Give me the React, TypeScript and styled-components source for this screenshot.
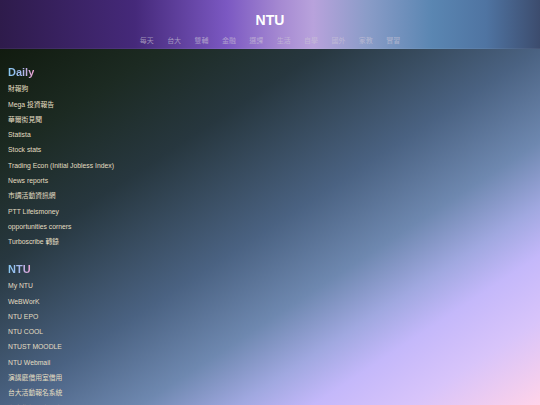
import styled, { createGlobalStyle } from "styled-components";

const GlobalStyle = createGlobalStyle`
  html, body {
    margin: 0;
    padding: 0;
    height: 100%;
  }
  body {
    font-family: "Liberation Sans", "Noto Sans CJK TC", Arial, sans-serif;
    background: #121c10;
  }
`;

const Page = styled.div`
  height: 100vh;
  display: flex;
  flex-direction: column;
  overflow: hidden;
`;

const Header = styled.header`
  flex: none;
  height: 49px;
  box-sizing: border-box;
  padding-top: 12px;
  display: flex;
  flex-direction: column;
  align-items: center;
  background: linear-gradient(
    90deg,
    #2e1b4b 0%,
    #45297a 25%,
    #7b58c2 42%,
    #a68ad2 52%,
    #b8a2dc 58%,
    #8a9cc8 68%,
    #5a86b2 80%,
    #4f74a2 90%,
    #3c4c6e 100%
  );
  border-bottom: 1px solid rgba(255, 255, 255, 0.06);
`;

const Title = styled.h1`
  margin: 0;
  font-size: 14px;
  line-height: 16px;
  font-weight: 700;
  color: #ffffff;
`;

const Nav = styled.nav`
  margin-top: 7px;
  display: flex;
  gap: 13.4px;
`;

const NavLink = styled.a`
  font-family: "Liberation Serif", "Noto Sans CJK TC", serif;
  font-size: 7px;
  line-height: 12px;
  color: rgba(205, 198, 215, 0.65);
  text-decoration: none;
`;

const Main = styled.main`
  flex: 1;
  overflow-y: auto;
  scrollbar-width: none;
  padding: 13px 8px 0;
  background: linear-gradient(
    to bottom right,
    #111b0f 0%,
    #1c2a22 15%,
    #27373f 30%,
    #4a6282 50%,
    #6e88b0 63%,
    #a0a8e0 72%,
    #c4b8fa 79%,
    #d8c4fa 88%,
    #ffd2e8 100%
  );
`;

const Section = styled.section`
  margin-bottom: 9.4px;
`;

const SectionTitle = styled.h2`
  margin: 0 0 2.3px;
  font-size: 11px;
  line-height: 14px;
  font-weight: 700;
  display: inline-block;
  background: linear-gradient(90deg, #86c8f2 0%, #a9b8ee 55%, #f2a2d2 100%);
  -webkit-background-clip: text;
  background-clip: text;
  color: transparent;
`;

const LinkList = styled.ul`
  list-style: none;
  margin: 0;
  padding: 0;
`;

const Item = styled.li`
  font-size: 6.8px;
  line-height: 15.3px;
  color: #e4dec2;
  white-space: nowrap;
`;

const navItems = ["每天", "台大", "雙輔", "金融", "選課", "生活", "自學", "國外", "家教", "實習"];

const sections = [
  {
    title: "Daily",
    links: [
      "財報狗",
      "Mega 投資報告",
      "華爾街見聞",
      "Statista",
      "Stock stats",
      "Trading Econ (Initial Jobless Index)",
      "News reports",
      "市調活動資訊網",
      "PTT Lifeismoney",
      "opportunities corners",
      "Turboscribe 轉錄",
    ],
  },
  {
    title: "NTU",
    links: [
      "My NTU",
      "WeBWorK",
      "NTU EPO",
      "NTU COOL",
      "NTUST MOODLE",
      "NTU Webmail",
      "演講廳借用室借用",
      "台大活動報名系統",
      "台大學術影音平台",
      "台大課程網",
      "台大圖書館",
    ],
  },
];

export default function App() {
  return (
    <Page>
      <GlobalStyle />
      <Header>
        <Title>NTU</Title>
        <Nav>
          {navItems.map((n) => (
            <NavLink key={n}>{n}</NavLink>
          ))}
        </Nav>
      </Header>
      <Main>
        {sections.map((s) => (
          <Section key={s.title}>
            <SectionTitle>{s.title}</SectionTitle>
            <LinkList>
              {s.links.map((l) => (
                <Item key={l}>{l}</Item>
              ))}
            </LinkList>
          </Section>
        ))}
      </Main>
    </Page>
  );
}
